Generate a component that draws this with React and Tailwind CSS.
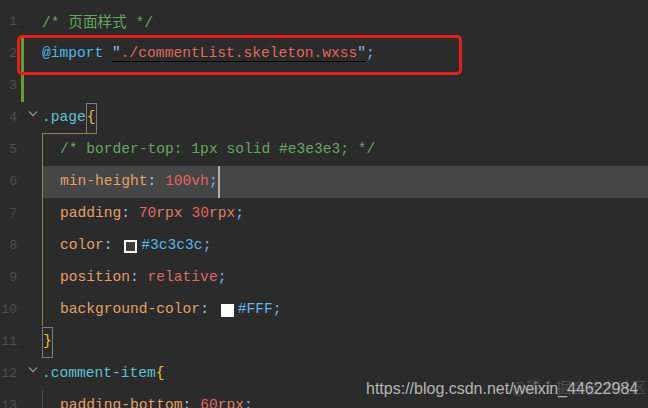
import React from 'react';

const C = {
  comment: 'text-[#62a85c]',
  at: 'text-[#4fb8e6]',
  str: 'text-[#e0695c]',
  quote: 'text-[#8ec6ec]',
  sel: 'text-[#5ec2d2]',
  brace: 'text-[#f0c030]',
  prop: 'text-[#e3a066]',
  punct: 'text-[#9dc3e0]',
  num: 'text-[#e2645f]',
  unit: 'text-[#d9806a]',
  hex: 'text-[#5bb6e8]',
  kw: 'text-[#d96b65]',
  semi: 'text-[#6fb4e8]',
};

const Chevron = () => (
  <svg width="10" height="7" viewBox="0 0 10 7" className="-mt-[8px]">
    <path d="M1 1.5 L5 5.5 L9 1.5" fill="none" stroke="#8a8a8a" strokeWidth="1.3" />
  </svg>
);

const Swatch = ({ fill }) => (
  <span className={`inline-block w-[13px] h-[13px] border-2 border-white ml-[3px] mr-[4px] ${fill}`} />
);

const Line = ({ n, changed, fold, children, codeClass = '' }) => (
  <div className="flex h-[32px] items-center">
    <div className="flex w-[42px] h-full items-center shrink-0">
      <span className="w-[17px] text-right text-[13px] text-[#4e4e4e]">{n}</span>
      <span className="w-[4px]" />
      <span className={`w-[3px] h-full ${changed ? 'bg-[#6a9a2a]' : ''}`} />
      <span className="w-[18px] flex justify-center">{fold ? <Chevron /> : null}</span>
    </div>
    <div className={`relative flex-1 h-full flex items-center whitespace-pre ${codeClass}`}>{children}</div>
  </div>
);

export default function App() {
  return (
    <div
      className="relative w-[648px] h-[408px] overflow-hidden bg-[#2b2b2b] text-[14.6px]"
      style={{ fontFamily: '"Liberation Mono", "Noto Sans CJK SC", monospace' }}
    >
      <div className="flex flex-col pt-[6px]">
        <Line n={1}>
          <span className={C.comment}>/* <span style={{ fontFamily: '"Noto Sans CJK SC", sans-serif' }}>页面样式</span> */</span>
        </Line>
        <Line n={2} changed>
          <span className={C.at}>@import</span>
          <span> </span>
          <span className="underline underline-offset-[4px]">
            <span className={C.quote}>"</span>
            <span className={C.str}>./commentList.skeleton.wxss</span>
            <span className={C.quote}>"</span>
          </span>
          <span className={C.semi}>;</span>
        </Line>
        <Line n={3} changed />
        <Line n={4} fold>
          <span className={C.sel}>.page</span>
          <span className={`${C.brace} border border-[#7d7d72] h-[31px] flex items-center`}>{'{'}</span>
          <span className="absolute left-0 bottom-0 w-[52px] h-px bg-[#8c8150]" />
        </Line>
        <Line n={5} codeClass="border-l border-[#8c8150] pl-[17px]">
          <span className={C.comment}>/* border-top: 1px solid #e3e3e3; */</span>
        </Line>
        <Line n={6} codeClass="border-l border-[#8c8150] pl-[17px] bg-[#464646]">
          <span className={C.prop}>min-height</span>
          <span className={C.punct}>: </span>
          <span className={C.num}>100vh</span>
          <span className={C.semi}>;</span>
          <span className="w-[2px] h-full bg-[#b0b0b0]" />
        </Line>
        <Line n={7} codeClass="border-l border-[#8c8150] pl-[17px]">
          <span className={C.prop}>padding</span>
          <span className={C.punct}>: </span>
          <span className={C.num}>70</span>
          <span className={C.unit}>rpx </span>
          <span className={C.num}>30</span>
          <span className={C.unit}>rpx</span>
          <span className={C.semi}>;</span>
        </Line>
        <Line n={8} codeClass="border-l border-[#8c8150] pl-[17px]">
          <span className={C.prop}>color</span>
          <span className={C.punct}>: </span>
          <Swatch fill="bg-[#3c3c3c]" />
          <span className={C.hex}>#3c3c3c</span>
          <span className={C.semi}>;</span>
        </Line>
        <Line n={9} codeClass="border-l border-[#8c8150] pl-[17px]">
          <span className={C.prop}>position</span>
          <span className={C.punct}>: </span>
          <span className={C.kw}>relative</span>
          <span className={C.semi}>;</span>
        </Line>
        <Line n={10} codeClass="border-l border-[#8c8150] pl-[17px]">
          <span className={C.prop}>background-color</span>
          <span className={C.punct}>: </span>
          <Swatch fill="bg-white" />
          <span className={C.hex}>#FFF</span>
          <span className={C.semi}>;</span>
        </Line>
        <Line n={11}>
          <span className={`${C.brace} border border-[#7d7d72] h-[31px] flex items-center`}>{'}'}</span>
        </Line>
        <Line n={12} fold>
          <span className={C.sel}>.comment-item</span>
          <span className={C.brace}>{'{'}</span>
        </Line>
        <Line n={13} codeClass="border-l border-[#4a4a4a] pl-[17px]">
          <span className={C.prop}>padding-bottom</span>
          <span className={C.punct}>: </span>
          <span className={C.num}>60</span>
          <span className={C.unit}>rpx</span>
          <span className={C.semi}>;</span>
        </Line>
      </div>

      <div className="absolute left-[17px] top-[35px] w-[445px] h-[40px] border-[3px] border-[#e3201b] rounded-[5px]" />

      <div
        className="absolute left-[512px] top-[376px] text-[15px] text-[#9a9a9a] opacity-30"
        style={{ fontFamily: '"Noto Sans CJK SC", sans-serif' }}
      >
        @稀土掘金技术社区
      </div>
      <div
        className="absolute left-[366px] top-[377px] text-[16px] text-[#c4c4c4] opacity-90"
        style={{ fontFamily: '"Liberation Sans", Arial, sans-serif' }}
      >
        https://blog.csdn.net/weixin_44622984
      </div>
    </div>
  );
}
